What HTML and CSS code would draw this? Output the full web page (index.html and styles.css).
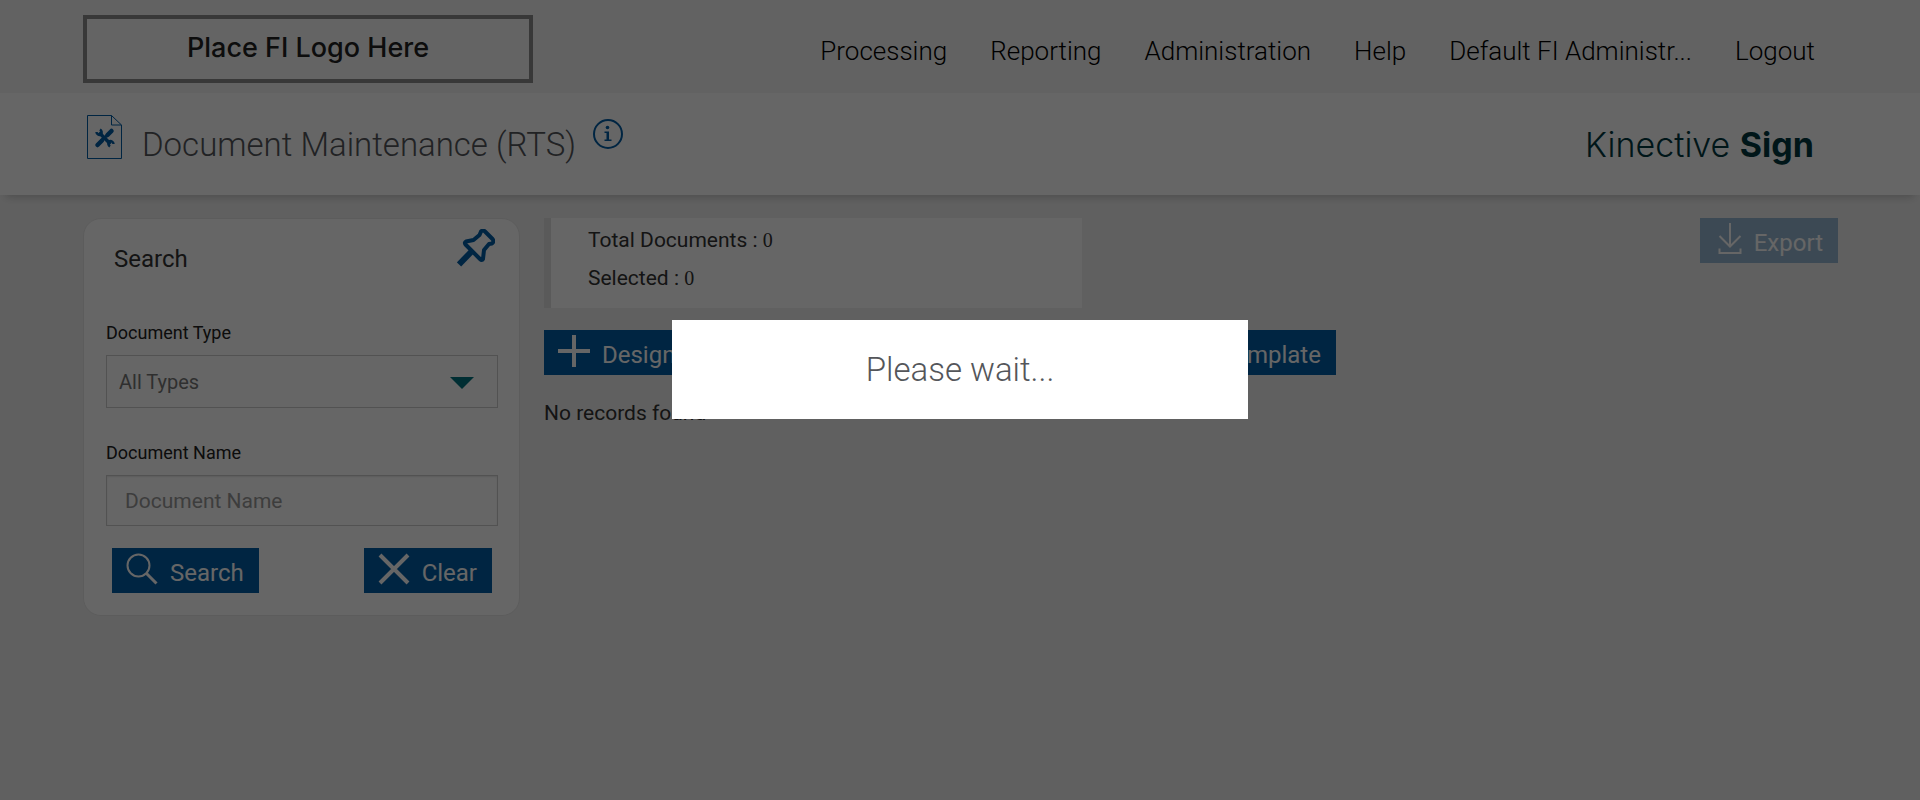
FILE: index.html
```html
<!DOCTYPE html>
<html lang="en">
<head>
  <meta charset="UTF-8">
  <meta name="viewport" content="width=device-width, initial-scale=1.0">
  <title>Document Maintenance (RTS)</title>
  <link rel="stylesheet" href="styles.css">
</head>
<body>
  <header class="top-bar">
    <div class="fi-logo">Place FI Logo Here</div>
    <nav class="main-nav">
      <a href="#">Processing</a>
      <a href="#">Reporting</a>
      <a href="#">Administration</a>
      <a href="#">Help</a>
      <a href="#">Default FI Administr...</a>
      <a href="#">Logout</a>
    </nav>
  </header>

  <div class="title-bar">
    <div class="page-title">
      <svg class="doc-icon" width="35" height="44" viewBox="0 0 35 44">
        <path d="M.5.5H24.500L34.500 10V43.500H.5ZM24.500.5V10H34.500" fill="none" stroke="#005ca5"/>
        <g stroke="#005ca5" fill="none">
          <path d="M12 17.500 23.500 29" stroke-width="3.500"/>
          <path d="M10.500 30 15 25.500M20.500 20 24.500 16" stroke-width="4.500" stroke-linecap="round"/>
          <path d="M14 26 22 18.500" stroke-width="3"/>
          <path d="M9.500 17a3 3 0 0 0 4.500 2.500 3.500 3.500 0 0 0-1-5M26.500 29a3 3 0 0 0-4.500-2.500 3.500 3.500 0 0 0 1 5" stroke-width="2.500"/>
        </g>
      </svg>
      <h1>Document Maintenance (RTS)</h1>
      <button class="icon-button" aria-label="Information">
        <svg width="32" height="32" viewBox="0 0 32 32">
          <circle cx="16" cy="16" r="14" fill="none" stroke="#005ca5" stroke-width="2"/>
          <circle cx="15.500" cy="9.500" r="1.800" fill="#005ca5"/>
          <path d="M12.500 13.500H17V21.500H19.500V23H12.500V21.500H14.500V15H12.500Z" fill="#005ca5"/>
        </svg>
      </button>
    </div>
    <div class="brand">Kinective <strong>Sign</strong></div>
  </div>

  <main class="content">
    <form class="search-card">
      <div class="card-header">
        <h2>Search</h2>
        <button type="button" class="icon-button" aria-label="Pin search">
          <svg width="38" height="38" viewBox="0 0 38 38" fill="none" stroke="#005ca5">
            <path d="M24 2.500q2-2 4 0L35.500 10q2 2.500-.5 4.500l-3 .5-5 6-1 9q-1 2-3 0L8.500 15.500q-1.500-2 .5-3L16.500 11 22.500 6Z" stroke-width="4" stroke-linejoin="round"/>
            <path d="M15 22 2 35.500" stroke-width="6"/>
          </svg>
        </button>
      </div>
      <div class="field">
        <label for="doc-type">Document Type</label>
        <div class="select-wrap">
          <select id="doc-type">
            <option>All Types</option>
          </select>
        </div>
      </div>
      <div class="field">
        <label for="doc-name">Document Name</label>
        <input type="text" id="doc-name" placeholder="Document Name">
      </div>
      <div class="card-actions">
        <button type="button" class="btn">
          <svg width="32" height="32" viewBox="0 0 32 32" fill="none" stroke="#fff" stroke-width="2">
            <circle cx="12.500" cy="12.500" r="11"/>
            <path d="M20 20 30.500 30.500" stroke-width="3"/>
          </svg>
          <span>Search</span>
        </button>
        <button type="button" class="btn">
          <svg width="32" height="32" viewBox="0 0 32 32" fill="none" stroke="#fff" stroke-width="4">
            <path d="M2 2 30 30M30 2 2 30"/>
          </svg>
          <span>Clear</span>
        </button>
      </div>
    </form>

    <section class="results">
      <div class="results-top">
        <div class="summary">
          <p>Total Documents : <span class="count">0</span></p>
          <p>Selected : <span class="count">0</span></p>
        </div>
        <button class="btn" disabled>
          <svg width="28" height="32" viewBox="0 0 28 32" fill="none" stroke="#fff" stroke-width="2">
            <path d="M16 0V24M5.500 13 16 23.500 26.500 13M5.500 25.500V30H26.500V25.500"/>
          </svg>
          <span>Export</span>
        </button>
      </div>
      <div class="toolbar">
        <button class="btn">
          <svg width="32" height="32" viewBox="0 0 32 32" fill="none" stroke="#fff" stroke-width="4">
            <path d="M16 0V32M0 16H32"/>
          </svg>
          <span>Design Template</span>
        </button>
        <button class="btn">
          <svg width="32" height="32" viewBox="0 0 32 32" fill="none" stroke="#fff" stroke-width="4">
            <path d="M16 0V32M0 16H32"/>
          </svg>
          <span>Add Template</span>
        </button>
      </div>
      <p class="empty">No records found</p>
    </section>
  </main>

  <div class="overlay"></div>
  <div class="wait-dialog" role="alertdialog" aria-label="Please wait">Please wait...</div>
</body>
</html>
```
FILE: styles.css
```css
* {
  box-sizing: border-box;
}

body {
  margin: 0;
  min-height: 100vh;
  background-color: #f0f0f0;
  font-family: Roboto, "Liberation Sans", sans-serif;
  color: #333;
}

h1,
h2,
p {
  margin: 0;
}

.top-bar {
  display: flex;
  align-items: center;
  justify-content: space-between;
  height: 93px;
  padding: 5px 105px 0 83px;
  background-color: #f5f5f5;
}

.fi-logo {
  width: 450px;
  height: 68px;
  border: 4px solid #8c8c8c;
  background-color: #fafafa;
  color: #222;
  font-family: Inter, sans-serif;
  font-size: 27px;
  font-weight: 500;
  line-height: 58px;
  text-align: center;
}

.main-nav {
  display: flex;
  gap: 43px;
  padding-top: 4px;
}

.main-nav a {
  color: #000;
  font-size: 26px;
  font-weight: 300;
  text-decoration: none;
}

.title-bar {
  display: flex;
  align-items: center;
  justify-content: space-between;
  height: 102px;
  padding: 0 106px 0 87px;
  background-color: #fff;
  box-shadow: 0 8px 8px -6px rgba(0, 0, 0, 0.2);
}

.page-title {
  display: flex;
  align-items: center;
}

.page-title h1 {
  margin: 0 16px 0 20px;
  font-size: 33px;
  font-weight: 300;
  color: #54565a;
}

.doc-icon {
  margin-bottom: 14px;
}

.icon-button {
  display: flex;
  padding: 0;
  border: none;
  background: none;
  cursor: pointer;
}

.page-title .icon-button {
  margin-bottom: 20px;
}

.brand {
  color: #00393f;
  font-family: Inter, sans-serif;
  font-size: 34px;
  font-weight: 300;
}

.brand strong {
  font-weight: 700;
}

.content {
  display: flex;
  align-items: flex-start;
  gap: 24px;
  padding: 23px 82px 0 83px;
}

.search-card {
  width: 437px;
  padding: 0 21px 22px 22px;
  border: 1px solid #e6e6e6;
  border-radius: 18px;
  background-color: #fff;
}

.card-header {
  display: flex;
  justify-content: space-between;
  height: 103px;
  padding: 10px 3px 0 8px;
}

.card-header h2 {
  padding-top: 16px;
  font-size: 24px;
  font-weight: 400;
  line-height: 28px;
}

.field {
  margin-bottom: 34px;
}

.field label {
  display: block;
  margin-bottom: 11px;
  color: #222;
  font-size: 18px;
  line-height: 22px;
}

.field input,
.field select {
  display: block;
  width: 100%;
  border: 1px solid #ccc;
  border-radius: 0;
  background-color: #fff;
  color: #777;
  font-family: inherit;
}

.field select {
  height: 53px;
  padding: 0 12px;
  font-size: 20px;
  appearance: none;
}

.field input {
  height: 51px;
  padding: 0 18px;
  font-size: 21px;
  box-shadow: inset 0 1px 2px rgba(0, 0, 0, 0.1);
}

.field input::placeholder {
  color: #999;
}

.select-wrap {
  position: relative;
}

.select-wrap::after {
  content: "";
  position: absolute;
  top: 22px;
  right: 24px;
  border: 12px solid transparent;
  border-top-color: #007380;
  border-bottom: none;
  pointer-events: none;
}

.card-actions {
  display: flex;
  justify-content: space-between;
  margin-top: -12px;
  padding: 0 6px;
}

.btn {
  display: flex;
  gap: 12px;
  height: 45px;
  padding: 5px 15px 0 14px;
  border: none;
  background-color: #005ca5;
  color: #fff;
  font-family: inherit;
  font-size: 24px;
  cursor: pointer;
}

.btn span {
  padding-top: 5px;
  line-height: 30px;
}

.btn:disabled {
  background-color: #97b7d1;
  color: #fff;
}

.results {
  flex: 1;
}

.results-top {
  display: flex;
  align-items: flex-start;
  justify-content: space-between;
}

.summary {
  width: 41.6%;
  height: 90px;
  padding: 3px 0 0 37px;
  border-left: 7px solid #e0e0e0;
  background-color: #fff;
}

.summary p {
  font-size: 21px;
  line-height: 38px;
}

.count {
  font-family: "Liberation Serif", serif;
  font-size: 20px;
}

.toolbar {
  display: flex;
  justify-content: space-between;
  width: 61.2%;
  margin: 22px 0 23px;
}

.empty {
  font-size: 21px;
  line-height: 30px;
}

.overlay {
  position: fixed;
  inset: 0;
  background-color: rgba(0, 0, 0, 0.6);
}

.wait-dialog {
  position: fixed;
  top: 40%;
  left: 35%;
  width: 30%;
  padding: 30px;
  background-color: #fff;
  color: #54565a;
  font-size: 33px;
  font-weight: 300;
  line-height: 39px;
  text-align: center;
}
```
